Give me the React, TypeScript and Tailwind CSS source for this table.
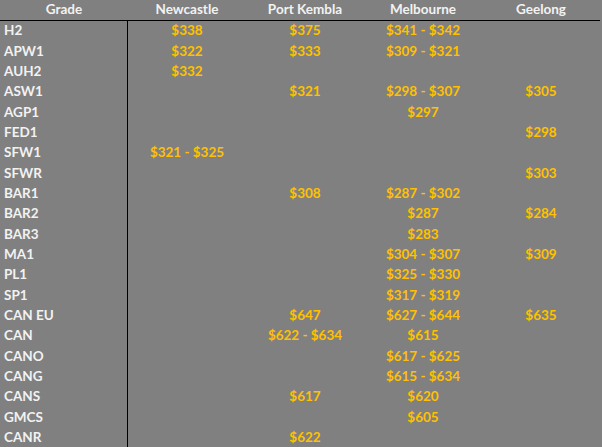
import React from "react";

const rows: [string, string, string, string, string][] = [
  ["H2", "$338", "$375", "$341 - $342", ""],
  ["APW1", "$322", "$333", "$309 - $321", ""],
  ["AUH2", "$332", "", "", ""],
  ["ASW1", "", "$321", "$298 - $307", "$305"],
  ["AGP1", "", "", "$297", ""],
  ["FED1", "", "", "", "$298"],
  ["SFW1", "$321 - $325", "", "", ""],
  ["SFWR", "", "", "", "$303"],
  ["BAR1", "", "$308", "$287 - $302", ""],
  ["BAR2", "", "", "$287", "$284"],
  ["BAR3", "", "", "$283", ""],
  ["MA1", "", "", "$304 - $307", "$309"],
  ["PL1", "", "", "$325 - $330", ""],
  ["SP1", "", "", "$317 - $319", ""],
  ["CAN EU", "", "$647", "$627 - $644", "$635"],
  ["CAN", "", "$622 - $634", "$615", ""],
  ["CANO", "", "", "$617 - $625", ""],
  ["CANG", "", "", "$615 - $634", ""],
  ["CANS", "", "$617", "$620", ""],
  ["GMCS", "", "", "$605", ""],
  ["CANR", "", "$622", "", ""],
];

export default function App() {
  return (
    <div
      className="w-[602px] h-[447px] bg-[#808080] overflow-hidden font-bold text-[13.5px] leading-none"
      style={{ fontFamily: "Lato, 'Noto Sans', sans-serif" }}
    >
      <div className="flex h-[21px] border-b border-black text-[#f2f2f2] w-[600px]">
        <div className="w-[128px] flex items-center justify-center">Grade</div>
        <div className="w-[118px] flex items-center justify-center">Newcastle</div>
        <div className="w-[118px] flex items-center justify-center">Port Kembla</div>
        <div className="w-[118px] flex items-center justify-center">Melbourne</div>
        <div className="w-[118px] flex items-center justify-center">Geelong</div>
      </div>
      <div className="flex">
        <div className="w-[128px] border-r border-black h-[426px]">
          {rows.map((r) => (
            <div key={r[0]} className="h-[20.33px] flex items-center pl-[4px] text-[#f2f2f2]">
              {r[0]}
            </div>
          ))}
        </div>
        <div className="flex-1">
          {rows.map((r) => (
            <div key={r[0]} className="h-[20.33px] flex text-[#ffc000]">
              {[r[1], r[2], r[3], r[4]].map((v, i) => (
                <div key={i} className="w-[118px] flex items-center justify-center">
                  {v}
                </div>
              ))}
            </div>
          ))}
        </div>
      </div>
    </div>
  );
}
